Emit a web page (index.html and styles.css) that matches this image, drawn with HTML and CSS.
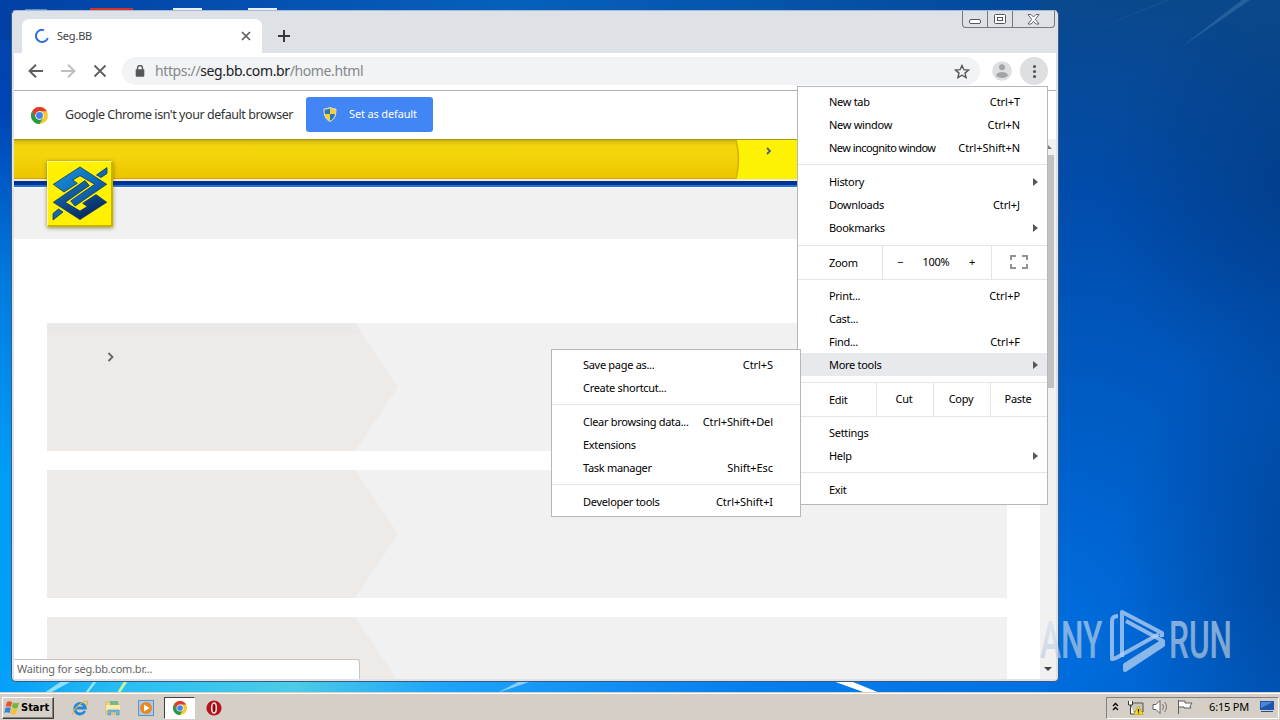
FILE: index.html
```html
<!DOCTYPE html>
<html lang="en">
<head>
    <meta charset="UTF-8">
    <meta name="viewport" content="width=device-width, initial-scale=1.0">
    <title>Seg.BB</title>
    <link rel="stylesheet" href="styles.css">
</head>
<body>
    <!-- Shared icons -->
    <svg width="0" height="0" class="defs">
        <symbol id="chrome" viewBox="0 0 24 24">
            <circle cx="12" cy="12" r="12" fill="#fbc72e"/>
            <path d="M12 6h10.400A12 12 0 0 0 1.600 6l5.200 9Z" fill="#db3c2e"/>
            <path d="M1.600 6A12 12 0 0 0 12 24l5.200-9L12 17.500 6.800 15Z" fill="#279847"/>
            <circle cx="12" cy="12" r="6" fill="#fff"/>
            <circle cx="12" cy="12" r="4.900" fill="#4384f3"/>
        </symbol>
    </svg>

    <!-- Wallpaper -->
    <svg class="wallpaper" viewBox="0 0 1280 720" preserveAspectRatio="none">
        <defs>
            <linearGradient id="left" x1="0" y1="0" x2="0" y2="1">
                <stop offset="0" stop-color="#0246a8"/>
                <stop offset=".15" stop-color="#0043b4"/>
                <stop offset=".4" stop-color="#007cdf"/>
                <stop offset=".65" stop-color="#009cf5"/>
                <stop offset="1" stop-color="#00a2fa"/>
            </linearGradient>
            <linearGradient id="top" x1="0" y1="0" x2="1" y2="0">
                <stop offset="0" stop-color="#0240a4"/>
                <stop offset=".4" stop-color="#0660bc"/>
                <stop offset=".8" stop-color="#04499a"/>
                <stop offset="1" stop-color="#0c4a86"/>
            </linearGradient>
            <linearGradient id="bottom" x1="0" y1="0" x2="1" y2="0">
                <stop offset="0" stop-color="#049ffa"/>
                <stop offset=".12" stop-color="#29bff2"/>
                <stop offset=".28" stop-color="#4bcce6"/>
                <stop offset=".42" stop-color="#1ea4fa"/>
                <stop offset=".7" stop-color="#0880ef"/>
                <stop offset="1" stop-color="#0070e2"/>
            </linearGradient>
            <radialGradient id="right" gradientUnits="userSpaceOnUse" cx="1030" cy="650" r="660">
                <stop offset="0" stop-color="#0070e2"/>
                <stop offset=".35" stop-color="#005dc6"/>
                <stop offset=".7" stop-color="#014cab"/>
                <stop offset="1" stop-color="#0a488c"/>
            </radialGradient>
            <radialGradient id="shade">
                <stop offset="0" stop-color="#003478" stop-opacity=".5"/>
                <stop offset="1" stop-color="#003478" stop-opacity="0"/>
            </radialGradient>
        </defs>
        <rect width="1280" height="720" fill="url(#left)"/>
        <rect width="1280" height="40" fill="url(#top)"/>
        <rect x="1040" width="240" height="720" fill="url(#right)"/>
        <ellipse cx="1290" cy="190" rx="190" ry="210" fill="url(#shade)"/>
        <ellipse cx="1310" cy="560" rx="190" ry="260" fill="url(#shade)"/>
        <rect y="670" width="1048" height="25" fill="url(#bottom)"/>
        <path d="M1180 48L1242 0h8Z" fill="#5a8fc0" opacity=".35"/>
        <path d="M1080 36L1165 0h6Z" fill="#5a8fc0" opacity=".12"/>
        <path d="M44 693L62 681h10L50 693Z" fill="#8fe0f6"/>
        <path d="M85 693L94 681h3L88 693Z" fill="#9be6f0"/>
        <path d="M117 693L124 681h4L120 693Z" fill="#c5f0a0"/>
        <path d="M497 693L520 681h12Z" fill="#8ccfff"/>
        <path d="M830 680h18L880 693H866Z" fill="#fff"/>
        <path d="M25 9h22v3H25z" fill="#5b8fc8"/>
        <path d="M90 8h43v5H90z" fill="#d5302a"/>
        <path d="M173 8h29v5H173zM248 8h29v5H248z" fill="#e8eef4"/>
    </svg>

    <div class="window">
        <div class="tabstrip">
            <div class="tab">
                <svg class="spinner" width="14" height="14" viewBox="0 0 14 14"><path d="M9 1.100A6.100 6.100 0 1 0 12.800 9" fill="none" stroke="#2f6fdf" stroke-width="2"/></svg>
                <span class="tab-title">Seg.BB</span>
                <svg width="10" height="10" viewBox="0 0 10 10"><path d="M1 1l8 8M9 1L1 9" stroke="#5a5d61" stroke-width="1.700"/></svg>
            </div>
            <svg class="new-tab" width="12" height="12" viewBox="0 0 12 12"><path d="M6 0v12M0 6h12" stroke="#35383c" stroke-width="2"/></svg>
            <div class="controls">
                <span><svg width="12" height="6" viewBox="0 0 12 6"><rect x=".5" y=".5" width="11" height="4" rx="1.500" fill="#fff" stroke="#53565e"/></svg></span>
                <span><svg width="12" height="11" viewBox="0 0 12 11"><rect x=".5" y=".5" width="11" height="9" rx="1" fill="#fff" stroke="#53565e"/><rect x="3.500" y="3.500" width="5" height="3" fill="#fff" stroke="#53565e"/></svg></span>
                <span><svg width="13" height="11" viewBox="0 0 13 11"><path d="M1 .5h3L6.500 3 9 .5h3L8.300 5.300 12 10H9L6.500 7.500 4 10H1l3.700-4.700Z" fill="#fff" stroke="#53565e" stroke-width=".9"/></svg></span>
            </div>
        </div>

        <div class="toolbar">
            <svg class="back" width="15" height="14" viewBox="0 0 15 14"><path d="M15 7H1.500M8 .7L1.500 7 8 13.300" fill="none" stroke="#5c5f63" stroke-width="1.900"/></svg>
            <svg width="15" height="14" viewBox="0 0 15 14"><path d="M0 7h13.500M7 .7L13.500 7 7 13.300" fill="none" stroke="#bcbec0" stroke-width="1.900"/></svg>
            <svg width="14" height="14" viewBox="0 0 14 14"><path d="M1.500 1.500l11 11M12.500 1.500l-11 11" stroke="#5c5f63" stroke-width="1.800"/></svg>
            <div class="omnibox">
                <svg width="10" height="12" viewBox="0 0 10 12"><path d="M2.500 5V3a2.500 2.500 0 0 1 5 0v2" fill="none" stroke="#54585d" stroke-width="1.400"/><rect x=".7" y="4.200" width="8.600" height="7.500" rx="1" fill="#54585d"/></svg>
                <span class="url">https://<b>seg.bb.com.br</b>/home.html</span>
                <svg width="16" height="15" viewBox="0 0 16 15"><path d="M8 1.500l1.900 4.200 4.600.4-3.500 3 1.100 4.500L8 11.200l-4.100 2.400L5 9.100l-3.500-3 4.600-.4Z" fill="none" stroke="#54585d" stroke-width="1.400"/></svg>
            </div>
            <svg class="avatar" width="20" height="20" viewBox="0 0 20 20"><circle cx="10" cy="10" r="9.800" fill="#dedfe0"/><circle cx="10" cy="6.300" r="3" fill="#a3a5a8"/><ellipse cx="10" cy="14" rx="5.800" ry="3" fill="#a3a5a8"/></svg>
            <div class="menu-button"><i></i><i></i><i></i></div>
        </div>

        <div class="infobar">
            <svg width="17" height="17"><use href="#chrome"/></svg>
            <span class="infobar-text">Google Chrome isn't your default browser</span>
            <div class="button">
                <svg width="14" height="15" viewBox="0 0 14 15"><path d="M7 .5c2 1 4 1.500 6 1.500 0 6-1 10-6 12.500C2 12 1 8 1 2c2 0 4-.5 6-1.500Z" fill="#f6d02c" stroke="#d6dde5"/><path d="M7 1.500V7H2C1.600 5.500 1.600 4 1.600 2.700 3.500 2.600 5.500 2.200 7 1.500ZM7 7h5c-.6 3-2 5.200-5 6.800Z" fill="#2a76b9"/></svg>
                <span>Set as default</span>
            </div>
        </div>

        <div class="content">
            <div class="page">
                <div class="brand-bar">
                    <svg class="brand-curve" width="68" height="39" viewBox="0 0 68 39"><path d="M0 0h68v39H0Q5 19 0 0Z" fill="#fdf203"/><path d="M0 0Q5 19 0 39" fill="none" stroke="#d8ac00" stroke-width="1.500"/></svg>
                    <svg class="brand-arrow" width="6" height="8" viewBox="0 0 6 8"><path d="M1 1l3 3-3 3" fill="none" stroke="#476091" stroke-width="1.800"/></svg>
                </div>
                <div class="blue-line"></div>
                <div class="subheader"></div>
                <div class="logo">
                    <svg width="56" height="56" viewBox="0 0 56 56">
                        <defs>
                            <linearGradient id="bb-top" x1="0" y1="0" x2="1" y2="1"><stop offset="0" stop-color="#1b95dc"/><stop offset=".5" stop-color="#1170bd"/><stop offset="1" stop-color="#0b3f86"/></linearGradient>
                            <linearGradient id="bb-bottom" x1="0" y1="0" x2=".6" y2="1"><stop offset="0" stop-color="#1b7cc6"/><stop offset="1" stop-color="#06265c"/></linearGradient>
                        </defs>
                        <g stroke="#0a3767" stroke-width=".8">
                            <path fill="url(#bb-top)" d="M28 1L54.700 18.300 23 40l-4.300-5 24-16.700L28 9.700 20.700 14l4.600 3.300L12 26 1.300 18.300Z"/>
                            <path fill="url(#bb-bottom)" d="M28 53.600L1.300 36.300 33 14.600l4.300 5-24 16.700L28 45l7.300-4.400-4.600-3.300L44 28.600l10.700 7.700Z"/>
                            <path fill="#1268ae" d="M44.500 9L55 1.500v6L49 11.500ZM1 54v-6.500L6.500 43l4.500 3Z"/>
                        </g>
                    </svg>
                </div>
                <div class="cards">
                    <div class="card"><div class="card-shape"></div><svg class="card-arrow" width="8" height="10" viewBox="0 0 8 10"><path d="M1.500 1l4 4-4 4" fill="none" stroke="#666" stroke-width="1.800"/></svg></div>
                    <div class="card"><div class="card-shape"></div></div>
                    <div class="card"><div class="card-shape"></div></div>
                </div>
            </div>
            <div class="scrollbar">
                <i class="up"></i>
                <div class="thumb"></div>
                <i class="down"></i>
            </div>
            <div class="status">Waiting for seg.bb.com.br...</div>
        </div>
    </div>

    <div class="menu main-menu">
        <div class="item"><span>New tab</span><kbd>Ctrl+T</kbd></div>
        <div class="item"><span>New window</span><kbd>Ctrl+N</kbd></div>
        <div class="item"><span class="tight">New incognito window</span><kbd>Ctrl+Shift+N</kbd></div>
        <hr>
        <div class="item"><span>History</span><i class="arrow"></i></div>
        <div class="item"><span>Downloads</span><kbd>Ctrl+J</kbd></div>
        <div class="item"><span>Bookmarks</span><i class="arrow"></i></div>
        <div class="row zoom-row">
            <span class="label">Zoom</span>
            <div class="zoom"><span>−</span><span>100%</span><span>+</span></div>
            <div class="cell"><svg class="fullscreen" width="18" height="14" viewBox="0 0 18 14"><path d="M1 5V1h5M12 1h5v4M17 9v4h-5M6 13H1V9" fill="none" stroke="#909295" stroke-width="2"/></svg></div>
        </div>
        <div class="item"><span>Print...</span><kbd>Ctrl+P</kbd></div>
        <div class="item"><span>Cast...</span></div>
        <div class="item"><span>Find...</span><kbd>Ctrl+F</kbd></div>
        <div class="item active"><span>More tools</span><i class="arrow"></i></div>
        <div class="row edit-row">
            <span class="label">Edit</span>
            <div class="cell">Cut</div>
            <div class="cell">Copy</div>
            <div class="cell">Paste</div>
        </div>
        <div class="item"><span>Settings</span></div>
        <div class="item"><span>Help</span><i class="arrow"></i></div>
        <hr>
        <div class="item"><span>Exit</span></div>
    </div>

    <div class="menu sub-menu">
        <div class="item"><span>Save page as...</span><kbd>Ctrl+S</kbd></div>
        <div class="item"><span>Create shortcut...</span></div>
        <hr>
        <div class="item"><span>Clear browsing data...</span><kbd>Ctrl+Shift+Del</kbd></div>
        <div class="item"><span>Extensions</span></div>
        <div class="item"><span>Task manager</span><kbd>Shift+Esc</kbd></div>
        <hr>
        <div class="item"><span>Developer tools</span><kbd>Ctrl+Shift+I</kbd></div>
    </div>

    <svg class="watermark" width="242" height="72" viewBox="0 0 242 72">
        <defs>
            <linearGradient id="mark" x1="0" y1="0" x2="0" y2="1">
                <stop offset="0" stop-color="#d5e2f0" stop-opacity=".62"/>
                <stop offset="1" stop-color="#b3c6da" stop-opacity=".68"/>
            </linearGradient>
        </defs>
        <g fill="url(#mark)" font-family="Roboto, sans-serif" font-size="51" font-weight="500" letter-spacing="0">
            <text transform="translate(2 51) scale(.62 1)">ANY</text>
            <text transform="translate(131 51) scale(.62 1)">RUN</text>
        </g>
        <g fill="none" stroke="#b9d3f2" stroke-opacity=".75" stroke-width="4" stroke-linejoin="round">
            <path d="M80 9q-6 0-6 5v38l4-1 43-24"/>
            <path d="M84 50V5l40 21v4M88 14l37 20-38 24v5l38-25v-4"/>
        </g>
    </svg>

    <div class="taskbar">
        <div class="start">
            <svg width="16" height="15" viewBox="0 0 16 15"><path d="M3 2q3-1.500 5 0L7 7q-3-1.500-5.500 0Z" fill="#e8502c"/><path d="M9 2.500q3 1.500 6 0L13.500 8q-3 1.300-5.500-.5Z" fill="#72b836"/><path d="M1.300 8q3-1.500 5.500 0l-1 5q-3-1.500-5.500 0Z" fill="#3c81d2"/><path d="M7.800 8.500q3 1.500 5.500.300L12 14q-3 1-5.300-.5Z" fill="#f7c32c"/></svg>
            <span>Start</span>
        </div>
        <div class="quick">
            <svg width="16" height="16" viewBox="0 0 16 16"><path d="M12.800 11A5.300 5.300 0 1 1 13.300 8H4" fill="none" stroke="#2287da" stroke-width="2.800"/><path d="M1 15C-1 12 9 1 15 1c2 2-1 5-1 5" fill="none" stroke="#e6b936" stroke-width="1.200"/></svg>
            <svg width="16" height="16" viewBox="0 0 16 16"><path d="M1 2h6l1 2h6v10H1z" fill="#efd984" stroke="#cfb45c" stroke-width=".8"/><path d="M5 1h8v4H5z" fill="#77b985"/><path d="M1 5h14v5H1z" fill="#fae9a8"/><path d="M3 15v-5h11v5h-2.500v-3h-6v3Z" fill="#73b8e4" stroke="#4a91c5" stroke-width=".6"/></svg>
            <svg width="16" height="16" viewBox="0 0 16 16"><rect x=".5" y=".5" width="15" height="15" fill="#a8cdec" stroke="#5f93c5"/><circle cx="8" cy="8" r="6" fill="#ee861c"/><path d="M6 4.500l5.500 3.500L6 11.500Z" fill="#fff"/></svg>
            <div class="pressed"><svg width="14" height="14"><use href="#chrome"/></svg></div>
            <svg width="16" height="16" viewBox="0 0 16 16"><circle cx="8" cy="8" r="7.600" fill="#b4141b"/><ellipse cx="8" cy="8" rx="2.300" ry="5" fill="#8e090e" stroke="#f4dcdc" stroke-width="1.600"/></svg>
        </div>
        <div class="tray">
            <svg width="7" height="9" viewBox="0 0 7 9"><path d="M1 4l2.500-2.500L6 4M1 8l2.500-2.500L6 8" fill="none" stroke="#000" stroke-width="1.300"/></svg>
            <svg width="17" height="16" viewBox="0 0 17 16"><path d="M4 4h12v9H4z" fill="#c9c7bc" stroke="#55534c"/><path d="M1.500 2v4h4V2M3.500 6v9h4" fill="#fff" stroke="#3c3b38"/><path d="M11.500 7l4.800 8.500H6.700Z" fill="#f8d91e" stroke="#bd9913" stroke-width=".6"/><path d="M11.500 10v2.700M11.500 13.400v1.200" stroke="#222" stroke-width="1.300"/></svg>
            <svg width="17" height="14" viewBox="0 0 17 14"><path d="M1 4.500h3l4-4v13l-4-4H1Z" fill="#fff" stroke="#66645f"/><path d="M10.500 4q2 3 0 6M12.500 2q4 5 0 10" fill="none" stroke="#77756f"/></svg>
            <svg width="16" height="14" viewBox="0 0 16 14"><path d="M1.500 0v14M1.500 1H8v2h7l-2 3 1 2H7V7H2" fill="#fff" stroke="#5f5d58"/></svg>
            <span class="clock">6:15 PM</span>
            <svg width="15" height="13" viewBox="0 0 15 13"><path d="M0 1h14v9H0z" fill="#1d55ac"/><path d="M1 2h12L1 8Z" fill="#4b89d8"/><path d="M1 11.500h12" stroke="#2c4d82"/></svg>
        </div>
    </div>
</body>
</html>
```

FILE: styles.css
```css
* {
    box-sizing: border-box;
}
body {
    margin: 0;
    width: 1280px;
    height: 720px;
    overflow: hidden;
    position: relative;
    font-family: "Noto Sans", sans-serif;
    font-size: 11px;
    letter-spacing: -0.3px;
    color: #000;
    background-color: #005cc8;
}
svg {
    display: block;
    flex: none;
}
.defs {
    position: absolute;
}
.wallpaper {
    position: absolute;
    left: 0;
    top: 0;
    width: 1280px;
    height: 720px;
}

/* Browser window */
.window {
    position: absolute;
    left: 11px;
    top: 10px;
    width: 1048px;
    height: 672px;
    padding: 0 2px 2px;
    border: 1px solid #3b5b80;
    border-top-color: #a5bbd7;
    border-radius: 5px;
    background-color: #dee1e6;
    display: flex;
    flex-direction: column;
    overflow: hidden;
}
.tabstrip {
    height: 42px;
    display: flex;
    align-items: flex-start;
}
.tab {
    width: 240px;
    height: 34px;
    margin: 8px 0 0 8px;
    padding: 0 11px 0 13px;
    display: flex;
    align-items: center;
    border-radius: 7px 7px 0 0;
    background-color: #fff;
    color: #3c4043;
}
.tab-title {
    flex: 1;
    margin: -2px 0 0 8px;
    letter-spacing: -0.2px;
}
.new-tab {
    margin: 19px 0 0 16px;
}
.controls {
    display: flex;
    margin-left: auto;
    margin-right: 1px;
    height: 17px;
    border: 1px solid #75787f;
    border-top: none;
    border-radius: 0 0 4px 4px;
}
.controls span {
    width: 25px;
    display: flex;
    align-items: center;
    justify-content: center;
    border-right: 1px solid #75787f;
}
.controls span:first-child {
    padding-top: 5px;
}
.controls span:last-child {
    width: 41px;
    border-right: none;
}
.toolbar {
    height: 38px;
    padding: 0 8px 1px 14px;
    display: flex;
    align-items: center;
    gap: 17px;
    background-color: #fff;
    border-bottom: 1px solid #adb0b3;
}
.back {
    margin-right: 1px;
}
.omnibox {
    flex: 1;
    height: 28px;
    margin-left: -2px;
    padding: 0 10px 0 13px;
    display: flex;
    align-items: center;
    border-radius: 14px;
    background-color: #f1f3f4;
}
.url {
    flex: 1;
    margin: -2px 0 0 10px;
    font-size: 14px;
    letter-spacing: -0.38px;
    color: #84888c;
}
.url b {
    font-weight: normal;
    color: #202124;
}
.avatar {
    margin-left: -5px;
}
.menu-button {
    width: 28px;
    height: 28px;
    margin-left: -9px;
    border-radius: 50%;
    background-color: #dedfe0;
    display: flex;
    flex-direction: column;
    align-items: center;
    justify-content: center;
    gap: 2px;
}
.menu-button i {
    width: 3px;
    height: 3px;
    border-radius: 50%;
    background-color: #505357;
}
.infobar {
    height: 48px;
    padding-left: 17px;
    display: flex;
    align-items: center;
    background-color: #fff;
    color: #333;
}
.infobar-text {
    width: 229px;
    margin: -1px 12px 0 17px;
    font-size: 12.5px;
    letter-spacing: -0.44px;
    white-space: nowrap;
}
.button {
    width: 127px;
    height: 35px;
    margin-top: -1px;
    padding-left: 17px;
    display: flex;
    align-items: center;
    gap: 12px;
    border-radius: 3px;
    background-color: #4285f4;
    color: #fff;
}
.button span {
    margin-top: -2px;
    letter-spacing: -0.15px;
}

/* Bank page */
.content {
    flex: 1;
    min-height: 0;
    position: relative;
    display: flex;
    overflow: hidden;
}
.page {
    flex: 1;
    position: relative;
    background-color: #fff;
}
.brand-bar {
    height: 40px;
    position: relative;
    border-bottom: 1px solid #d9a400;
    background: linear-gradient(#9c8a1b 0, #d8bc0e 2px, #f3d60c 7px, #f4d40a 45%, #ecc500 100%);
}
.brand-curve {
    position: absolute;
    left: 722px;
    top: 1px;
}
.brand-arrow {
    position: absolute;
    left: 752px;
    top: 8px;
}
.blue-line {
    height: 8px;
    border-top: 2px solid #f5eec5;
    border-bottom: 2px solid #2277c8;
    background-color: #00309a;
}
.subheader {
    height: 52px;
    border-top: 1px solid #fff;
    background-color: #f1f1f2;
}
.logo {
    position: absolute;
    left: 33px;
    top: 22px;
    width: 66px;
    height: 66px;
    padding: 4px;
    border: solid;
    border-width: 1px 2px 2px 1px;
    border-color: #fffa8c #c9b300 #c9b300 #fffa8c;
    background-color: #fff100;
    box-shadow: 0 1px 4px rgba(80, 70, 0, 0.6);
}
.cards {
    margin: 84px 33px 0;
    display: flex;
    flex-direction: column;
    gap: 19px;
}
.card {
    position: relative;
    height: 128px;
    background-color: #f1f1f1;
}
.card-shape {
    width: 351px;
    height: 128px;
    background: #edeae8;
    clip-path: polygon(0 0, 308px 0, 351px 64px, 308px 100%, 0 100%);
}
.card:first-child .card-shape {
    background: linear-gradient(#eae9e8 10px, #edeae8 12px);
}
.card-arrow {
    position: absolute;
    left: 60px;
    top: 29px;
}
.scrollbar {
    width: 16px;
    padding: 6px 2px 8px 1px;
    display: flex;
    flex-direction: column;
    align-items: center;
    background-color: #f1f1f1;
}
.scrollbar i {
    border: 4px solid transparent;
}
.scrollbar .up {
    border-top: none;
    border-bottom-color: #75777a;
}
.scrollbar .down {
    margin-top: auto;
    border-bottom: none;
    border-top-color: #404347;
}
.thumb {
    width: 13px;
    height: 233px;
    margin-top: 6px;
    background-color: #c1c1c1;
}
.status {
    position: absolute;
    left: 0;
    bottom: 0;
    width: 346px;
    height: 20px;
    padding-left: 3px;
    line-height: 18px;
    letter-spacing: -0.22px;
    border: 1px solid #c4c4c4;
    border-left: none;
    border-bottom: none;
    border-radius: 0 3px 0 0;
    background-color: #fff;
    color: #666;
}

/* Menus */
.menu {
    position: absolute;
    padding: 3px 0;
    border: 1px solid #b5b7ba;
    background-color: #fff;
}
.main-menu {
    left: 797px;
    top: 86px;
    width: 251px;
    height: 419px;
}
.sub-menu {
    left: 551px;
    top: 349px;
    width: 250px;
    height: 168px;
}
.item {
    height: 23px;
    padding: 0 27px 0 31px;
    display: flex;
    align-items: center;
    white-space: nowrap;
}
.item.active {
    background-color: #e8e9ed;
}
.item kbd {
    margin-left: auto;
    font-family: inherit;
    font-size: 11px;
    letter-spacing: -0.08px;
}
.tight {
    letter-spacing: -0.55px;
}
.arrow {
    margin-left: auto;
    margin-right: -18px;
    border: 4px solid transparent;
    border-left: 5px solid #55575a;
    border-right: none;
}
.menu hr {
    height: 1px;
    margin: 5px 0;
    border: none;
    background-color: #e4e5e8;
}
.row {
    height: 35px;
    display: grid;
    border: solid #e4e5e8;
    border-width: 1px 0;
}
.zoom-row {
    margin: 6px 0 4px;
    grid-template-columns: 84px 109px 1fr;
}
.edit-row {
    margin: 6px 0 4px;
    grid-template-columns: 78px 57px 57px 1fr;
}
.label {
    padding: 1px 0 0 31px;
    line-height: 32px;
}
.cell,
.zoom {
    padding: 0 2px 3px 0;
    border-left: 1px solid #e4e5e8;
    display: flex;
    align-items: center;
    justify-content: center;
}
.zoom {
    justify-content: space-between;
    padding: 0 16px 3px 14px;
}
.fullscreen {
    margin-top: 2px;
}

/* Watermark */
.watermark {
    position: absolute;
    left: 1038px;
    top: 607px;
}

/* Taskbar */
.taskbar {
    position: absolute;
    left: 0;
    bottom: 0;
    width: 1280px;
    height: 28px;
    padding: 3px 0 1px 2px;
    display: flex;
    align-items: center;
    border-top: 1px solid #d4d0c8;
    box-shadow: inset 0 1px #fff;
    background-color: #d5cfc7;
}
.start {
    width: 52px;
    height: 22px;
    padding-left: 1px;
    display: flex;
    align-items: center;
    gap: 1px;
    border: 1px solid;
    border-color: #fff #404040 #404040 #fff;
    box-shadow: inset -1px -1px #848078;
    font-family: "DejaVu Sans Condensed", sans-serif;
    font-weight: bold;
    letter-spacing: 0;
}
.quick {
    display: flex;
    align-items: center;
    gap: 17px;
    margin-left: 18px;
}
.pressed {
    width: 31px;
    height: 22px;
    margin: 0 -6px 0 -7px;
    display: flex;
    align-items: center;
    justify-content: center;
    border: 1px solid;
    border-color: #404040 #fff #fff #404040;
    background-color: #fff;
}
.tray {
    width: 173px;
    height: 22px;
    margin-left: auto;
    margin-right: 1px;
    padding: 0 3px 2px 5px;
    display: flex;
    align-items: center;
    gap: 8px;
    border: 1px solid;
    border-color: #808080 #fff #fff #808080;
}
.clock {
    margin-left: auto;
    margin-right: 3px;
    letter-spacing: -0.2px;
}
```
